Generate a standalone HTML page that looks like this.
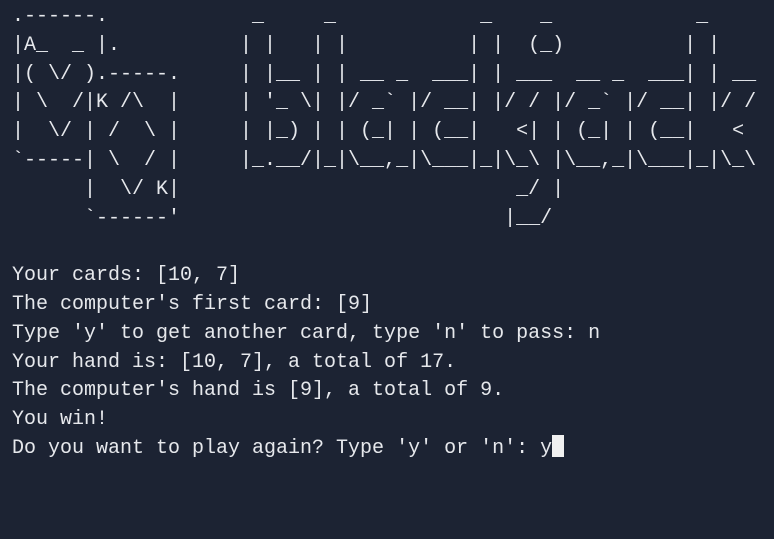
<!DOCTYPE html>
<html><head><meta charset="utf-8"><style>
html,body{margin:0;padding:0;background:#1c2333;width:774px;height:539px;overflow:hidden}
pre{margin:0;position:absolute;left:12px;top:3px;font-family:"Liberation Mono",monospace;font-size:20px;line-height:28.8px;color:#e6e8ec;white-space:pre}
.cur{display:inline-block;width:12px;height:22px;background:#f0f0f0;vertical-align:-4px}
</style></head><body>
<pre>.------.            _     _            _    _            _
|A_  _ |.          | |   | |          | |  (_)          | |
|( \/ ).-----.     | |__ | | __ _  ___| | ___  __ _  ___| | __
| \  /|K /\  |     | '_ \| |/ _` |/ __| |/ / |/ _` |/ __| |/ /
|  \/ | /  \ |     | |_) | | (_| | (__|   &lt;| | (_| | (__|   &lt;
`-----| \  / |     |_.__/|_|\__,_|\___|_|\_\ |\__,_|\___|_|\_\
      |  \/ K|                            _/ |
      `------'                           |__/

Your cards: [10, 7]
The computer's first card: [9]
Type 'y' to get another card, type 'n' to pass: n
Your hand is: [10, 7], a total of 17.
The computer's hand is [9], a total of 9.
You win!
Do you want to play again? Type 'y' or 'n': y<span class="cur"></span></pre>
</body></html>
